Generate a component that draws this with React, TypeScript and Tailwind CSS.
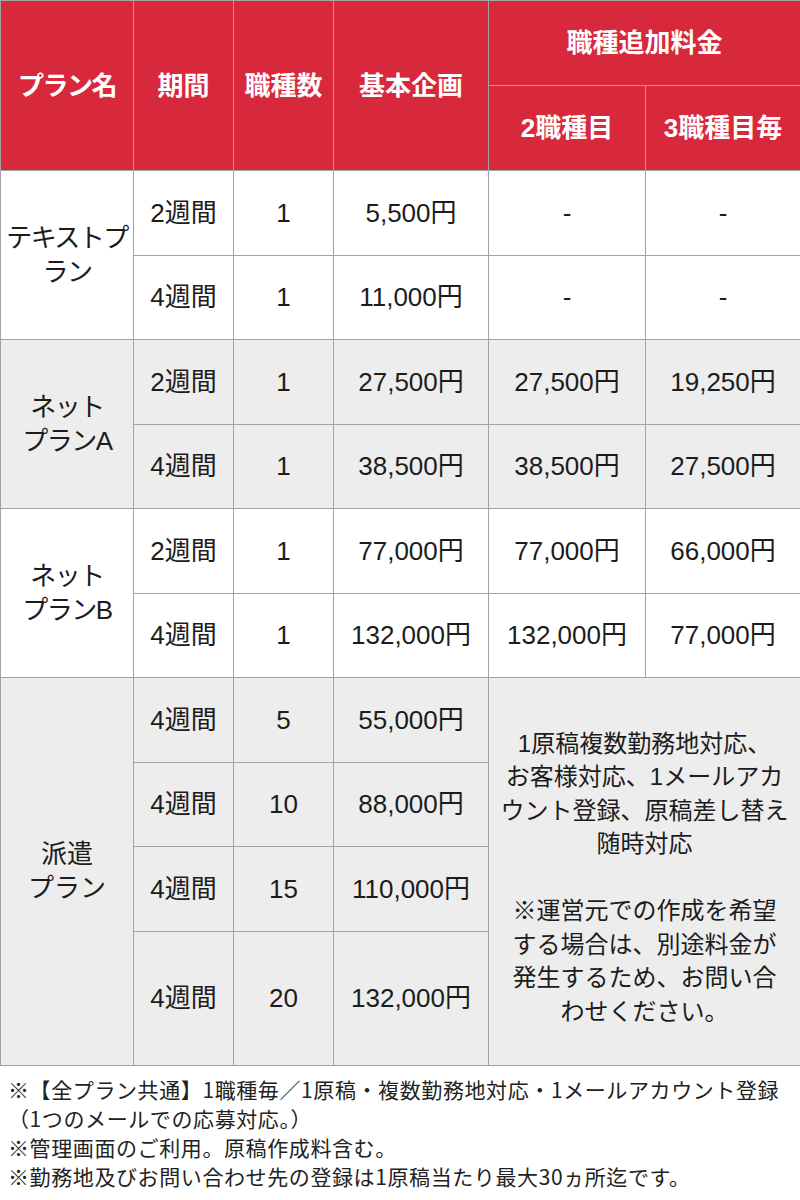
const rows: { plan?: [string, string]; span?: number; gray: boolean; period: string; count: string; base: string; add2?: string; add3?: string }[] = [
  { plan: ["テキストプ", "ラン"], span: 2, gray: false, period: "2週間", count: "1", base: "5,500円", add2: "-", add3: "-" },
  { gray: false, period: "4週間", count: "1", base: "11,000円", add2: "-", add3: "-" },
  { plan: ["ネット", "プランA"], span: 2, gray: true, period: "2週間", count: "1", base: "27,500円", add2: "27,500円", add3: "19,250円" },
  { gray: true, period: "4週間", count: "1", base: "38,500円", add2: "38,500円", add3: "27,500円" },
  { plan: ["ネット", "プランB"], span: 2, gray: false, period: "2週間", count: "1", base: "77,000円", add2: "77,000円", add3: "66,000円" },
  { gray: false, period: "4週間", count: "1", base: "132,000円", add2: "132,000円", add3: "77,000円" },
];

const dispatch = [
  { period: "4週間", count: "5", base: "55,000円" },
  { period: "4週間", count: "10", base: "88,000円" },
  { period: "4週間", count: "15", base: "110,000円" },
  { period: "4週間", count: "20", base: "132,000円" },
];

const td = "border border-[#a3a3a3] text-center align-middle";
const th = "border border-[#a3a3a3] text-center align-middle font-bold text-white text-[26px]";

export default function App() {
  return (
    <div className="w-[800px] bg-white text-[#1c1c1c]" style={{ fontFamily: '"Liberation Sans", "Noto Sans CJK JP", sans-serif' }}>
      <table className="w-[800px] table-fixed border-collapse text-[26px] leading-[34px]">
        <colgroup>
          <col className="w-[133px]" />
          <col className="w-[100px]" />
          <col className="w-[100px]" />
          <col className="w-[155px]" />
          <col className="w-[157px]" />
          <col className="w-[155px]" />
        </colgroup>
        <thead className="bg-[#d7293b]">
          <tr className="h-[85px]">
            <th rowSpan={2} className={`${th} tracking-[-1.5px]`}>プラン名</th>
            <th rowSpan={2} className={th}>期間</th>
            <th rowSpan={2} className={th}>職種数</th>
            <th rowSpan={2} className={th}>基本企画</th>
            <th colSpan={2} className={th}>職種追加料金</th>
          </tr>
          <tr className="h-[85px]">
            <th className={th}>2職種目</th>
            <th className={th}>3職種目毎</th>
          </tr>
        </thead>
        <tbody>
          {rows.map((r, i) => (
            <tr key={i} className={`h-[84.5px] ${r.gray ? "bg-[#ededed]" : "bg-white"}`}>
              {r.plan && (
                <td rowSpan={r.span} className={`${td} tracking-[-1.5px]`}>
                  {r.plan[0]}
                  <br />
                  {r.plan[1]}
                </td>
              )}
              <td className={td}>{r.period}</td>
              <td className={td}>{r.count}</td>
              <td className={td}>{r.base}</td>
              <td className={td}>{r.add2}</td>
              <td className={td}>{r.add3}</td>
            </tr>
          ))}
          {dispatch.map((r, i) => (
            <tr key={i} className={`bg-[#ededed] ${i === 3 ? "h-[134px]" : "h-[84.5px]"}`}>
              {i === 0 && (
                <td rowSpan={4} className={td}>
                  派遣
                  <br />
                  プラン
                </td>
              )}
              <td className={td}>{r.period}</td>
              <td className={td}>{r.count}</td>
              <td className={td}>{r.base}</td>
              {i === 0 && (
                <td rowSpan={4} colSpan={2} className={`${td} text-[24px] leading-[33.5px] pt-3`}>
                  1原稿複数勤務地対応、
                  <br />
                  お客様対応、1メールアカ
                  <br />
                  ウント登録、原稿差し替え
                  <br />
                  随時対応
                  <br />
                  <br />
                  ※運営元での作成を希望
                  <br />
                  する場合は、別途料金が
                  <br />
                  発生するため、お問い合
                  <br />
                  わせください。
                </td>
              )}
            </tr>
          ))}
        </tbody>
      </table>
      <div
        className="px-[8px] pt-[9px] pb-4 text-[21px] leading-[29px] tracking-[0.6px] text-[#222]"
        style={{ fontFamily: '"Noto Sans CJK JP", sans-serif' }}
      >
        <p className="whitespace-nowrap">※【全プラン共通】1職種毎／1原稿・複数勤務地対応・1メールアカウント登録</p>
        <p>（1つのメールでの応募対応。）</p>
        <p>※管理画面のご利用。原稿作成料含む。</p>
        <p>※勤務地及びお問い合わせ先の登録は1原稿当たり最大30ヵ所迄です。</p>
      </div>
    </div>
  );
}
